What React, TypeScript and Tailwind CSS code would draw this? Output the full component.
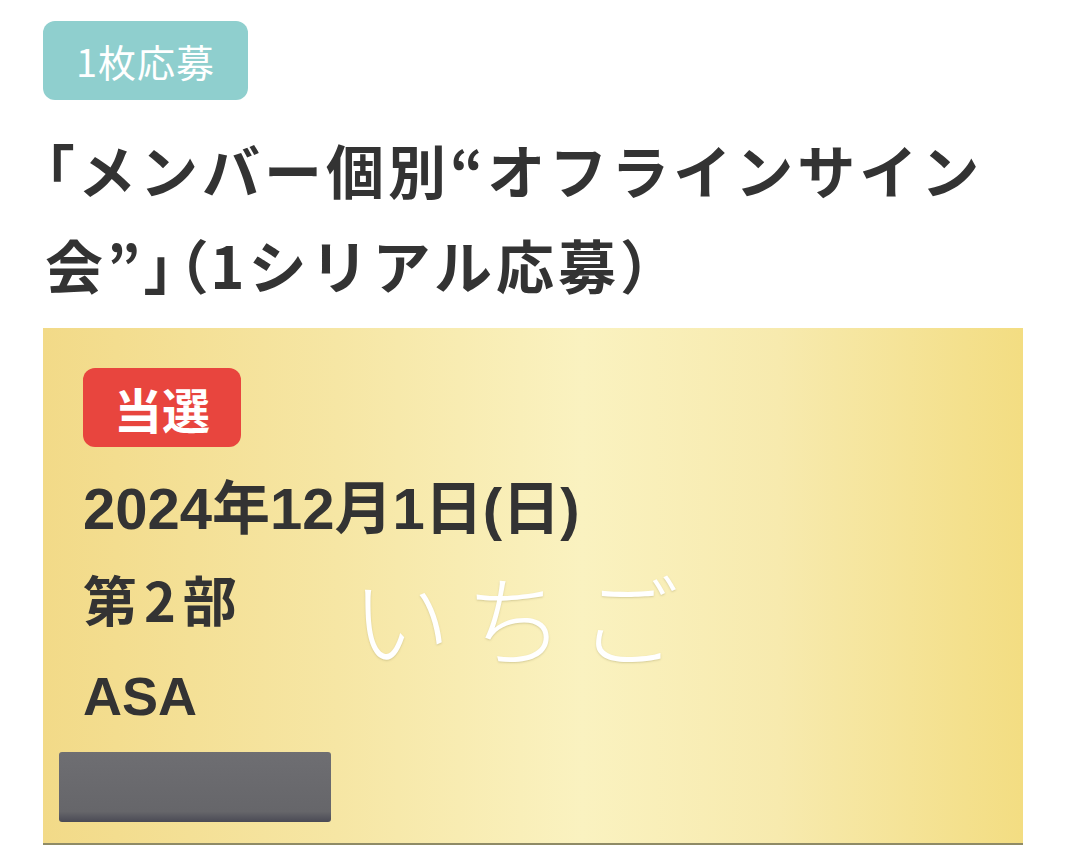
import React from 'react';

const jp = "font-['Noto_Sans_CJK_JP','Noto_Sans',sans-serif]";
const latin = "font-['Liberation_Sans','Noto_Sans_CJK_JP',sans-serif]";

function Badge({ label, className }: { label: string; className: string }) {
  return (
    <div className={`inline-flex items-center justify-center h-[79px] rounded-[12px] text-white ${className}`}>
      {label}
    </div>
  );
}

export default function App() {
  return (
    <div className={`min-h-[845px] w-[1080px] overflow-hidden bg-white text-[#333333] ${jp}`}>
      <div className="pl-[43px] pt-[21px]">
        <Badge label="1枚応募" className="w-[205px] bg-[#8fcfce] text-[38px] tracking-[1px]" />

        <h1 className="mt-[22px] pl-[2px] text-[58px] font-bold leading-[95px] tracking-[4px]">
          <span className="[font-feature-settings:'palt']">「</span>メンバー個別
          <span className="[font-feature-settings:'palt']">“</span>オフラインサイン
          <br />
          会<span className="[font-feature-settings:'palt']">”」（</span>1シリアル応募）
        </h1>

        <div className="relative mt-[16px] w-[980px] bg-[linear-gradient(90deg,#f2da88_0%,#f6e6a4_30%,#faf2c0_55%,#f7eaae_75%,#f3dd82_100%)] border-b-2 border-[#8f8b66] pt-[40px] pb-[21px] pl-[40px]">
          <Badge label="当選" className="w-[158px] bg-[#e8453e] text-[48px] font-bold rounded-[10px]" />

          <div className="mt-[10px] font-bold leading-[95px]">
            <div className={`${latin} text-[58px]`}>
              2024<span className={jp}>年</span>12<span className={jp}>月</span>1<span className={jp}>日</span>(<span className={jp}>日</span>)
            </div>
            <div className="-mt-[5px] text-[54px] tracking-[7px]">第2部</div>
            <div className={`${latin} mt-[3px] text-[54px]`}>ASA</div>
          </div>

          <div className="-ml-[24px] mt-[8px] h-[70px] w-[272px] rounded-[3px] bg-[linear-gradient(180deg,#6e6e72_0%,#66666a_85%,#4a4a55_100%)]" />

          <div className="absolute left-[308px] top-[238px] text-[100px] font-light leading-none tracking-[14px] text-white [text-shadow:0_1px_2px_rgba(150,140,90,0.35)]">
            いちご
          </div>
        </div>
      </div>
    </div>
  );
}
